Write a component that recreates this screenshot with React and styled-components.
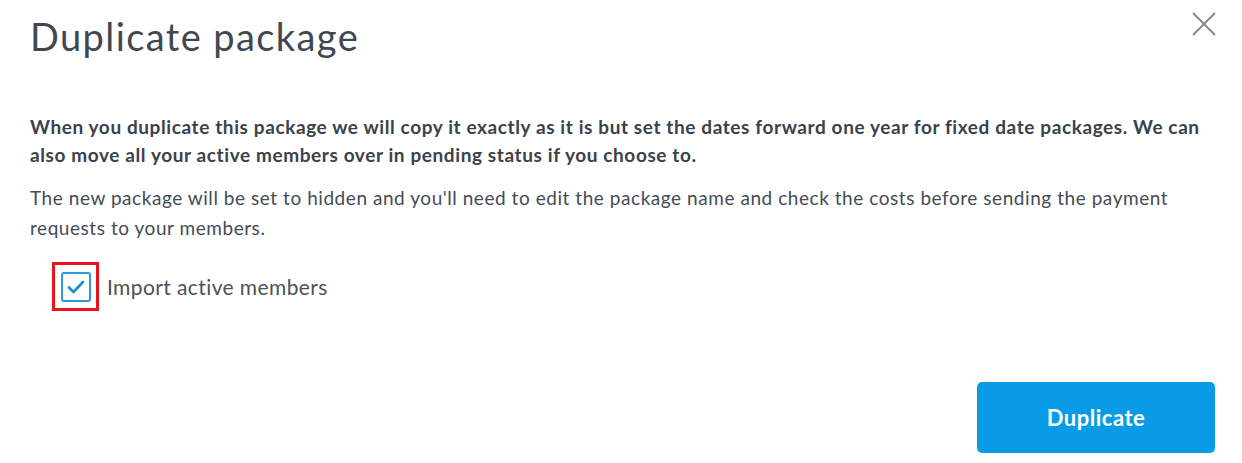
import React from 'react';
import styled, { createGlobalStyle } from 'styled-components';

const GlobalStyle = createGlobalStyle`
    html, body {
        margin: 0;
        padding: 0;
        background: #ffffff;
    }
    body {
        font-family: Lato, "Open Sans", sans-serif;
        color: #3f4852;
    }
`;

const ModalDiv = styled.div`
    width: 1242px;
    height: 463px;
    box-sizing: border-box;
    padding: 14px 27px 10px 30px;
    display: flex;
    flex-direction: column;
`;

const HeaderDiv = styled.div`
    display: flex;
    justify-content: space-between;
    align-items: flex-start;
    height: 80px;
`;

const TitleH1 = styled.h1`
    margin: 0;
    font-size: 38px;
    font-weight: 400;
    letter-spacing: 1.4px;
    line-height: 44px;
    color: #3f4852;
`;

const CloseButton = styled.button`
    border: none;
    background: none;
    padding: 0;
    margin: -5px -4px 0 0;
    width: 30px;
    height: 30px;
    display: flex;
    align-items: center;
    justify-content: center;
    cursor: pointer;
`;

const BodyDiv = styled.div`
    padding-top: 19px;
`;

const LeadP = styled.p`
    margin: 0;
    font-size: 19px;
    font-weight: 700;
    letter-spacing: 0.6px;
    line-height: 28px;
    color: #3a424b;
`;

const NoteP = styled.p`
    margin: 14px 0 0;
    font-size: 19px;
    font-weight: 400;
    letter-spacing: 0.55px;
    line-height: 30px;
    color: #444c56;
`;

const CheckRow = styled.label`
    display: flex;
    align-items: center;
    margin-top: 19px;
    gap: 8px;
    cursor: pointer;
`;

const Highlight = styled.span`
    display: flex;
    align-items: center;
    justify-content: center;
    width: 47px;
    height: 49px;
    box-sizing: border-box;
    border: 3px solid #e8141b;
    margin-left: 22px;
`;

const CheckBox = styled.span`
    width: 30px;
    height: 30px;
    box-sizing: border-box;
    border: 2px solid #2a9bd6;
    border-radius: 3px;
    background: #ffffff;
    display: flex;
    align-items: center;
    justify-content: center;
`;

const CheckLabel = styled.span`
    font-size: 21px;
    letter-spacing: 0.4px;
    color: #4a525c;
`;

const FooterDiv = styled.div`
    margin-top: auto;
    display: flex;
    justify-content: flex-end;
`;

const PrimaryButton = styled.button`
    width: 238px;
    height: 71px;
    border: none;
    border-radius: 5px;
    background-color: #0a9be6;
    color: #ffffff;
    font-family: Lato, sans-serif;
    font-size: 22px;
    font-weight: 700;
    letter-spacing: 0.5px;
    cursor: pointer;
`;

function App() {
    return (
        <ModalDiv>
            <GlobalStyle />
            <HeaderDiv>
                <TitleH1>Duplicate package</TitleH1>
                <CloseButton aria-label="Close">
                    <svg width="26" height="26" viewBox="0 0 26 26">
                        <path d="M2 2 L24 24 M24 2 L2 24" stroke="#8a8a8a" strokeWidth="2" fill="none" />
                    </svg>
                </CloseButton>
            </HeaderDiv>

            <BodyDiv>
                <LeadP>
                    When you duplicate this package we will copy it exactly as it is but set the dates forward one year for fixed date packages. We can
                    also move all your active members over in pending status if you choose to.
                </LeadP>
                <NoteP>
                    The new package will be set to hidden and you'll need to edit the package name and check the costs before sending the payment
                    requests to your members.
                </NoteP>
                <CheckRow>
                    <Highlight>
                        <CheckBox>
                            <svg width="18" height="14" viewBox="0 0 18 14">
                                <path d="M2 7.5 L6.5 12 L16 2" stroke="#1a8fd0" strokeWidth="2.6" fill="none" strokeLinecap="round" strokeLinejoin="round" />
                            </svg>
                        </CheckBox>
                    </Highlight>
                    <CheckLabel>Import active members</CheckLabel>
                </CheckRow>
            </BodyDiv>

            <FooterDiv>
                <PrimaryButton type="button">Duplicate</PrimaryButton>
            </FooterDiv>
        </ModalDiv>
    );
}

export default App;
